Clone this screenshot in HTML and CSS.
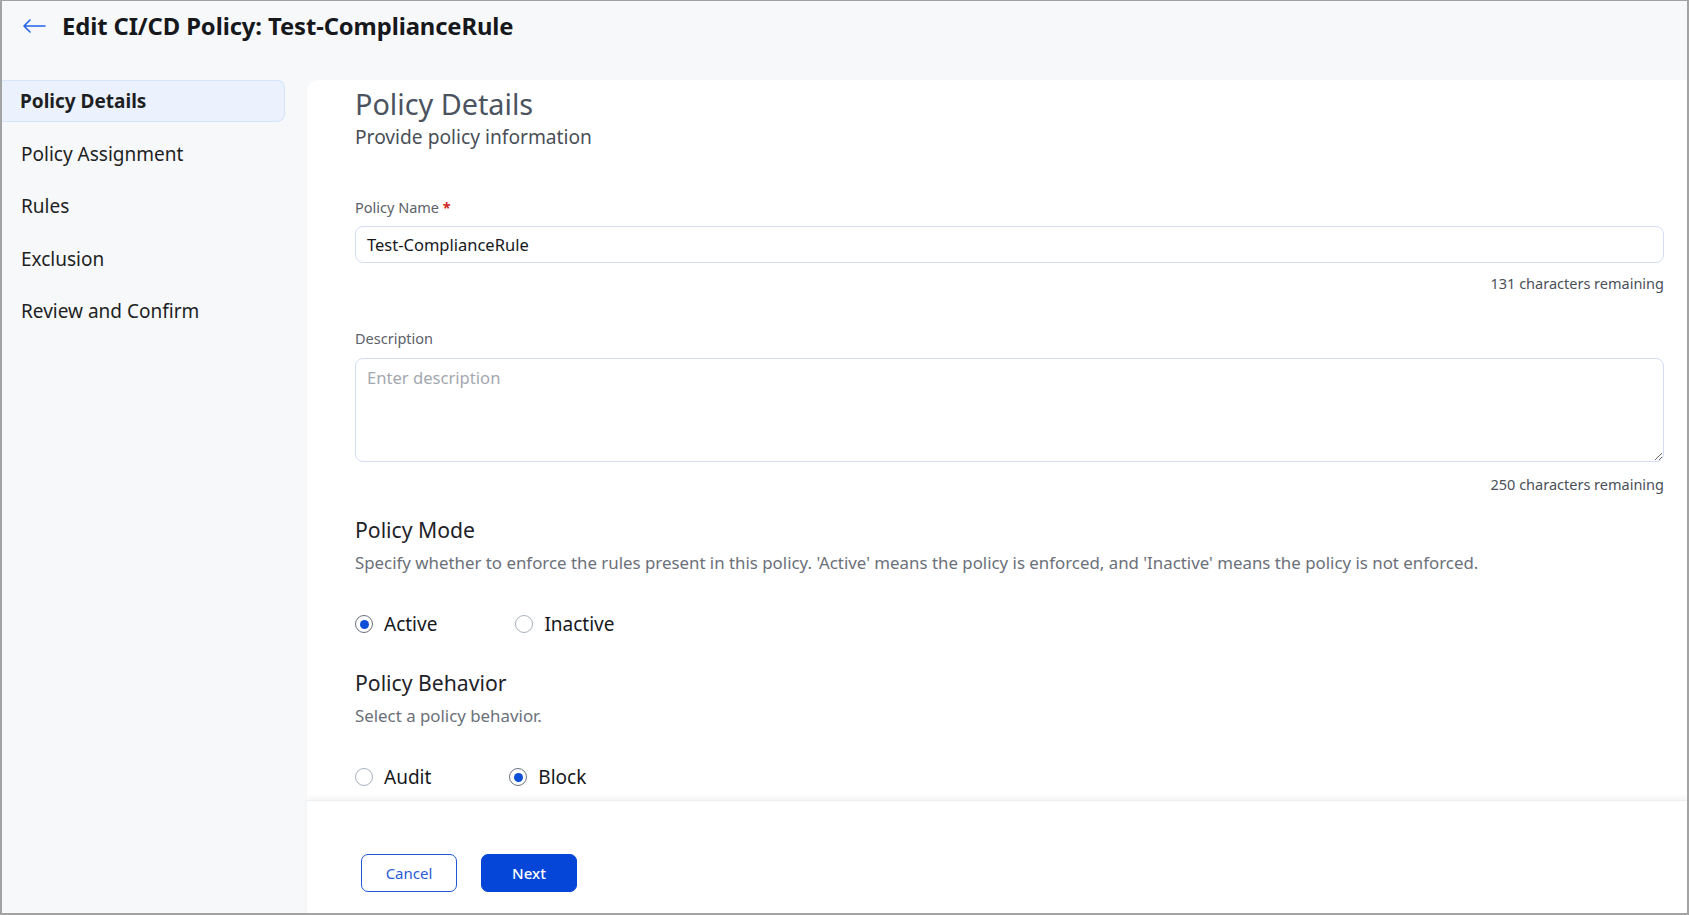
FILE: index.html
```html
<!DOCTYPE html>
<html lang="en">
<head>
<meta charset="utf-8">
<title>Edit CI/CD Policy</title>
<link rel="stylesheet" href="styles.css">
</head>
<body>
<div class="frame">
  <header class="topbar">
    <svg class="back" width="24" height="16" viewBox="0 0 24 16" aria-hidden="true">
      <path d="M23 8H2M8 2L2 8l6 6" fill="none" stroke="#2563eb" stroke-width="1.6" stroke-linecap="round" stroke-linejoin="round"/>
    </svg>
    <h1 class="title">Edit CI/CD Policy: Test-ComplianceRule</h1>
  </header>
  <div class="body">
    <nav class="sidebar">
      <div class="nav-item active">Policy Details</div>
      <div class="nav-item">Policy Assignment</div>
      <div class="nav-item">Rules</div>
      <div class="nav-item">Exclusion</div>
      <div class="nav-item">Review and Confirm</div>
    </nav>
    <main class="card">
      <div class="content">
        <h2 class="section-title">Policy Details</h2>
        <p class="section-sub">Provide policy information</p>

        <label class="field-label first">Policy Name <span class="req">*</span></label>
        <div class="input">Test-ComplianceRule</div>
        <div class="counter">131 characters remaining</div>

        <label class="field-label second">Description</label>
        <textarea class="textarea" placeholder="Enter description"></textarea>
        <div class="counter counter-2">250 characters remaining</div>

        <h3 class="group-title mode">Policy Mode</h3>
        <p class="group-desc">Specify whether to enforce the rules present in this policy. 'Active' means the policy is enforced, and 'Inactive' means the policy is not enforced.</p>
        <div class="radios">
          <div class="radio-opt"><span class="radio checked"></span><span class="radio-label">Active</span></div>
          <div class="radio-opt"><span class="radio"></span><span class="radio-label">Inactive</span></div>
        </div>

        <h3 class="group-title behavior">Policy Behavior</h3>
        <p class="group-desc">Select a policy behavior.</p>
        <div class="radios">
          <div class="radio-opt"><span class="radio"></span><span class="radio-label">Audit</span></div>
          <div class="radio-opt"><span class="radio checked"></span><span class="radio-label">Block</span></div>
        </div>
      </div>
      <footer class="footer">
        <button class="btn btn-outline">Cancel</button>
        <button class="btn btn-primary">Next</button>
      </footer>
    </main>
  </div>
</div>
</body>
</html>
```
FILE: styles.css
```css
* { box-sizing: border-box; }
html, body { margin: 0; padding: 0; }
body {
  font-family: "Noto Sans", "Open Sans", sans-serif;
  background: #ffffff;
  color: #1d1f23;
}
.frame {
  width: 1689px;
  height: 915px;
  border: 2px solid #a3a3a3;
  border-top-width: 1px;
  background: #f7f8fa;
  display: flex;
  flex-direction: column;
  overflow: hidden;
}
.topbar {
  height: 79px;
  flex: 0 0 79px;
  display: flex;
  align-items: flex-start;
  padding: 11px 0 0 20px;
  gap: 16px;
}
.back { margin-top: 6px; flex: 0 0 auto; }
.title {
  margin: 0;
  font-size: 23.8px;
  line-height: 28px;
  font-weight: 700;
  color: #16181c;
  letter-spacing: -0.1px;
}
.body {
  flex: 1;
  display: flex;
  min-height: 0;
}
.sidebar {
  width: 305px;
  flex: 0 0 305px;
  padding-right: 22px;
  display: flex;
  flex-direction: column;
  gap: 10.6px;
}
.nav-item {
  height: 42px;
  display: flex;
  align-items: center;
  padding-left: 18px;
  font-size: 19px;
  color: #1d1f23;
  border: 1px solid transparent;
}
.nav-item.active {
  background: #ebf2fe;
  border-color: #d5e3fb;
  border-left: none;
  border-radius: 0 8px 8px 0;
  font-weight: 700;
}
.card {
  flex: 1;
  background: #ffffff;
  border-top-left-radius: 12px;
  display: flex;
  flex-direction: column;
  min-width: 0;
}
.content {
  flex: 1;
  padding: 6px 23px 0 48px;
  display: flex;
  flex-direction: column;
  overflow: hidden;
}
.section-title {
  margin: 0;
  font-size: 28.8px;
  line-height: 36px;
  font-weight: 400;
  color: #4b5360;
}
.section-sub {
  margin: 3px 0 0;
  font-size: 19.2px;
  line-height: 24px;
  color: #4a4f57;
}
.field-label {
  display: block;
  font-size: 14.5px;
  line-height: 20px;
  color: #5b6169;
}
.field-label.first { margin-top: 48px; }
.field-label.second { margin-top: 35px; }
.req { color: #d0271d; font-weight: 700; }
.input {
  margin-top: 9px;
  height: 37px;
  border: 1px solid #d3def3;
  border-radius: 8px;
  padding: 0 11px;
  display: flex;
  align-items: center;
  font-size: 16.5px;
  color: #16181c;
}
.counter {
  margin-top: 10px;
  text-align: right;
  font-size: 14.5px;
  line-height: 20px;
  color: #4a5058;
}
.counter-2 { margin-top: 12px; }
.textarea {
  margin-top: 10px;
  height: 104px;
  width: 100%;
  border: 1px solid #d3def3;
  border-radius: 8px;
  padding: 7px 11px;
  font-family: inherit;
  font-size: 16.6px;
  color: #16181c;
  resize: vertical;
  outline: none;
}
.textarea::placeholder { color: #a3a8b0; }
.group-title {
  margin: 0;
  font-size: 21.2px;
  line-height: 28px;
  font-weight: 400;
  color: #1f2329;
}
.group-title.mode { margin-top: 22px; }
.group-title.behavior { margin-top: 32px; }
.group-desc {
  margin: 7px 0 0;
  font-size: 16.85px;
  line-height: 24px;
  color: #6b7079;
}
.radios {
  margin-top: 36px;
  display: flex;
  gap: 78px;
  height: 26px;
  align-items: center;
}
.radio-opt {
  display: flex;
  align-items: center;
  gap: 11px;
}
.radio {
  width: 18px;
  height: 18px;
  border-radius: 50%;
  border: 1.5px solid #aab2bd;
  display: flex;
  align-items: center;
  justify-content: center;
}
.radio.checked { border-color: #6a717c; }
.radio.checked::after {
  content: "";
  width: 9px;
  height: 9px;
  border-radius: 50%;
  background: #0b4fd8;
}
.radio-label {
  font-size: 19px;
  line-height: 26px;
  color: #16181c;
}
.footer {
  flex: 0 0 113px;
  height: 113px;
  border-top: 1px solid #eceef2;
  box-shadow: 0 -3px 4px rgba(20, 30, 60, 0.04);
  padding: 53px 0 0 54px;
  display: flex;
  align-items: flex-start;
  gap: 24px;
  background: #ffffff;
}
.btn {
  width: 96px;
  height: 38px;
  border-radius: 7px;
  font-family: inherit;
  font-size: 15px;
  cursor: pointer;
}
.btn-outline {
  background: #ffffff;
  border: 1px solid #1f57d6;
  color: #2a5bd7;
}
.btn-primary {
  background: #0546d8;
  border: 1px solid #0546d8;
  color: #ffffff;
  font-weight: 500;
}
```
